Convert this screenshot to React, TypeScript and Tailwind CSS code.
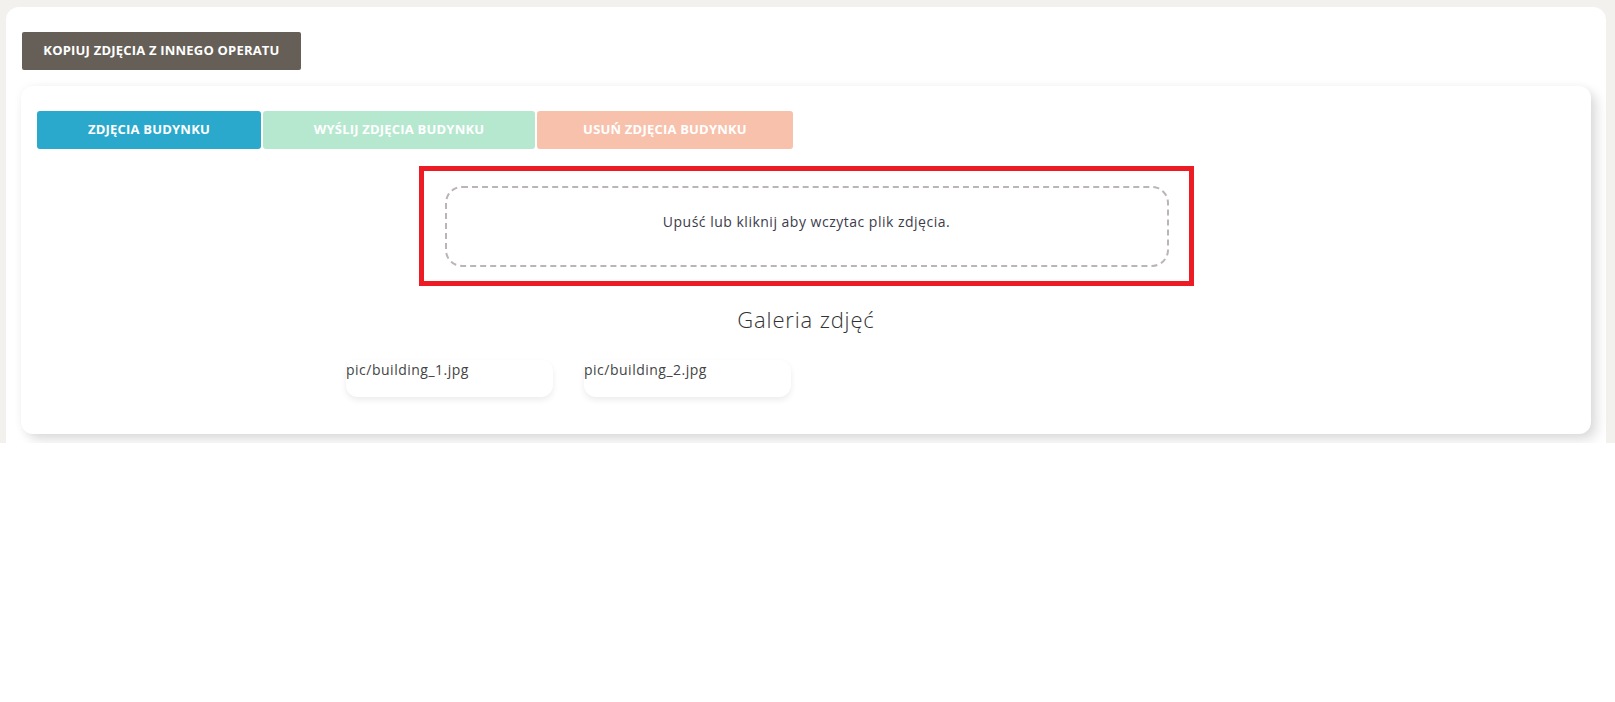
export default function App() {
    const tabs = [
        { label: "ZDJĘCIA BUDYNKU", cls: "w-[224px] bg-[#2aa9cd]" },
        { label: "WYŚLIJ ZDJĘCIA BUDYNKU", cls: "w-[272px] bg-[#b6e8d0]" },
        { label: "USUŃ ZDJĘCIA BUDYNKU", cls: "w-[256px] bg-[#f7c1ac]" },
    ];
    const pics = ["pic/building_1.jpg", "pic/building_2.jpg"];

    return (
        <div className="w-full bg-white" style={{ fontFamily: "'Open Sans', 'Liberation Sans', sans-serif" }}>
            {/* Beige wrapper */}
            <div className="h-[443px] overflow-hidden bg-[#f2f1ed] pt-[7px] pl-[6px] pr-[9px]">
                <div className="h-full rounded-t-[13px] bg-white px-[15px] pt-[25px]">
                    <button className="ml-px h-[38px] w-[279px] rounded-[2px] bg-[#665f58] text-[13px] font-bold tracking-[0.2px] text-white">
                        KOPIUJ ZDJĘCIA Z INNEGO OPERATU
                    </button>

                    {/* Inner card */}
                    <div className="mt-[16px] rounded-[12px] bg-white px-[16px] pt-[25px] pb-[37px] shadow-[0_0_10px_rgba(0,0,0,0.04),6px_6px_12px_rgba(0,0,0,0.13)]">
                        {/* Tabs */}
                        <div className="flex gap-[2px]">
                            {tabs.map((t) => (
                                <div
                                    key={t.label}
                                    className={`flex h-[38px] items-center justify-center rounded-[3px] text-[13px] font-bold tracking-[0.2px] text-white ${t.cls}`}
                                >
                                    {t.label}
                                </div>
                            ))}
                        </div>

                        {/* Drop zone */}
                        <div className="mt-[17px] flex justify-center">
                            <div className="w-[775px] border-[5px] border-[#ed1c24] pt-[15px] pr-[20px] pb-[14px] pl-[21px]">
                                <div className="h-[81px] rounded-[17px] border-2 border-dashed border-[#bbb5b5] pt-[23px] text-center text-[14px] tracking-[0.5px] text-[#3c3b4a]">
                                    Upuść lub kliknij aby wczytac plik zdjęcia.
                                </div>
                            </div>
                        </div>

                        {/* Gallery */}
                        <h3 className="mt-[17px] text-center text-[22px] font-light tracking-[0.85px] text-[#333]">Galeria zdjęć</h3>
                        <div className="mt-[24px] flex gap-[31px] pl-[309px]">
                            {pics.map((p) => (
                                <div
                                    key={p}
                                    className="h-[37px] w-[207px] rounded-[12px] bg-white text-[14px] leading-[20px] tracking-[0.5px] text-[#444] shadow-[0_3px_6px_rgba(0,0,0,0.08)]"
                                >
                                    {p}
                                </div>
                            ))}
                        </div>
                    </div>
                </div>
            </div>
        </div>
    );
}
